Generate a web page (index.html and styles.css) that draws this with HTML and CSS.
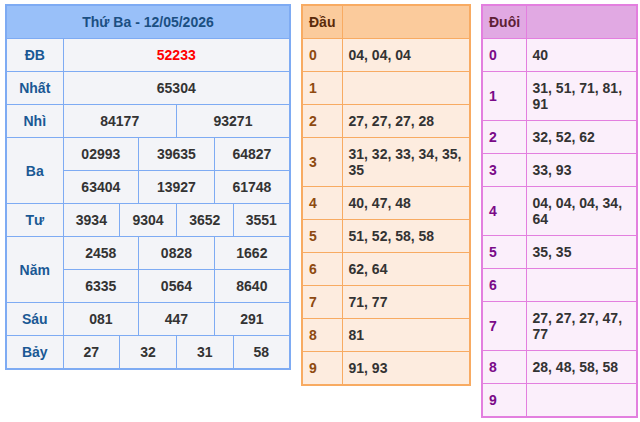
FILE: index.html
```html
<!DOCTYPE html>
<html lang="vi">
<head>
<meta charset="utf-8">
<title>Kết quả xổ số</title>
<link rel="stylesheet" href="styles.css">
</head>
<body>
<div class="board">
  <table class="kq">
    <colgroup>
      <col class="kq-label">
      <col><col><col><col><col><col><col><col><col><col><col><col>
    </colgroup>
    <tr><th colspan="13" class="kq-head">Thứ Ba - 12/05/2026</th></tr>
    <tr><td class="lbl">ĐB</td><td colspan="12" class="db">52233</td></tr>
    <tr><td class="lbl">Nhất</td><td colspan="12">65304</td></tr>
    <tr><td class="lbl">Nhì</td><td colspan="6">84177</td><td colspan="6">93271</td></tr>
    <tr><td class="lbl" rowspan="2">Ba</td><td colspan="4">02993</td><td colspan="4">39635</td><td colspan="4">64827</td></tr>
    <tr><td colspan="4">63404</td><td colspan="4">13927</td><td colspan="4">61748</td></tr>
    <tr><td class="lbl">Tư</td><td colspan="3">3934</td><td colspan="3">9304</td><td colspan="3">3652</td><td colspan="3">3551</td></tr>
    <tr><td class="lbl" rowspan="2">Năm</td><td colspan="4">2458</td><td colspan="4">0828</td><td colspan="4">1662</td></tr>
    <tr><td colspan="4">6335</td><td colspan="4">0564</td><td colspan="4">8640</td></tr>
    <tr><td class="lbl">Sáu</td><td colspan="4">081</td><td colspan="4">447</td><td colspan="4">291</td></tr>
    <tr><td class="lbl">Bảy</td><td colspan="3">27</td><td colspan="3">32</td><td colspan="3">31</td><td colspan="3">58</td></tr>
  </table>

  <table class="lo dau">
    <colgroup><col class="lo-key"><col></colgroup>
    <tr><th>Đầu</th><th></th></tr>
    <tr><td class="key">0</td><td>04, 04, 04</td></tr>
    <tr><td class="key">1</td><td></td></tr>
    <tr><td class="key">2</td><td>27, 27, 27, 28</td></tr>
    <tr><td class="key">3</td><td>31, 32, 33, 34, 35, 35</td></tr>
    <tr><td class="key">4</td><td>40, 47, 48</td></tr>
    <tr><td class="key">5</td><td>51, 52, 58, 58</td></tr>
    <tr><td class="key">6</td><td>62, 64</td></tr>
    <tr><td class="key">7</td><td>71, 77</td></tr>
    <tr><td class="key">8</td><td>81</td></tr>
    <tr><td class="key">9</td><td>91, 93</td></tr>
  </table>

  <table class="lo duoi">
    <colgroup><col class="lo-key"><col></colgroup>
    <tr><th>Đuôi</th><th></th></tr>
    <tr><td class="key">0</td><td>40</td></tr>
    <tr><td class="key">1</td><td>31, 51, 71, 81, 91</td></tr>
    <tr><td class="key">2</td><td>32, 52, 62</td></tr>
    <tr><td class="key">3</td><td>33, 93</td></tr>
    <tr><td class="key">4</td><td>04, 04, 04, 34, 64</td></tr>
    <tr><td class="key">5</td><td>35, 35</td></tr>
    <tr><td class="key">6</td><td></td></tr>
    <tr><td class="key">7</td><td>27, 27, 27, 47, 77</td></tr>
    <tr><td class="key">8</td><td>28, 48, 58, 58</td></tr>
    <tr><td class="key">9</td><td></td></tr>
  </table>
</div>
</body>
</html>
```

FILE: styles.css
```css
html, body {
  margin: 0;
  padding: 0;
  background: #ffffff;
}

body {
  font-family: "Liberation Sans", Arial, Helvetica, sans-serif;
  font-size: 14px;
  font-weight: bold;
  color: #333333;
}

.board {
  display: flex;
  align-items: flex-start;
  gap: 10px;
  padding: 4px 0 0 5px;
}

table {
  border-collapse: collapse;
  table-layout: fixed;
}

th, td {
  padding: 8px 0;
  line-height: 16px;
  font-weight: bold;
}

/* results table */
.kq {
  width: 286px;
  border: 2px solid #7eabf3;
  background: #f3f4f8;
}

.kq th, .kq td {
  border: 1px solid #7eabf3;
  text-align: center;
}

.kq-label {
  width: 57px;
}

.kq-head {
  background: #99c0f9;
  color: #1b4f82;
  font-size: 14px;
}

.kq .lbl {
  color: #1a5894;
}

.kq .db {
  color: #ff0000;
}

/* loto tables */
.lo th, .lo td {
  text-align: left;
  padding-left: 6px;
  padding-right: 4px;
}

.lo-key {
  width: 40px;
}

.dau {
  width: 170px;
  border: 2px solid #f8ab62;
  background: #fdecdf;
}

.dau th, .dau td {
  border: 1px solid #f8ab62;
}

.dau th {
  background: #fbcb9c;
  color: #5a2a0a;
}

.dau .key {
  color: #8e4a10;
}

.duoi {
  width: 157px;
  border: 2px solid #e37fdf;
  background: #fbeffb;
}

.duoi .lo-key {
  width: 44px;
}

.duoi th, .duoi td {
  border: 1px solid #e37fdf;
}

.duoi th {
  background: #e1a9e3;
  color: #5e1f35;
}

.duoi .key {
  color: #7a0a88;
}
```
